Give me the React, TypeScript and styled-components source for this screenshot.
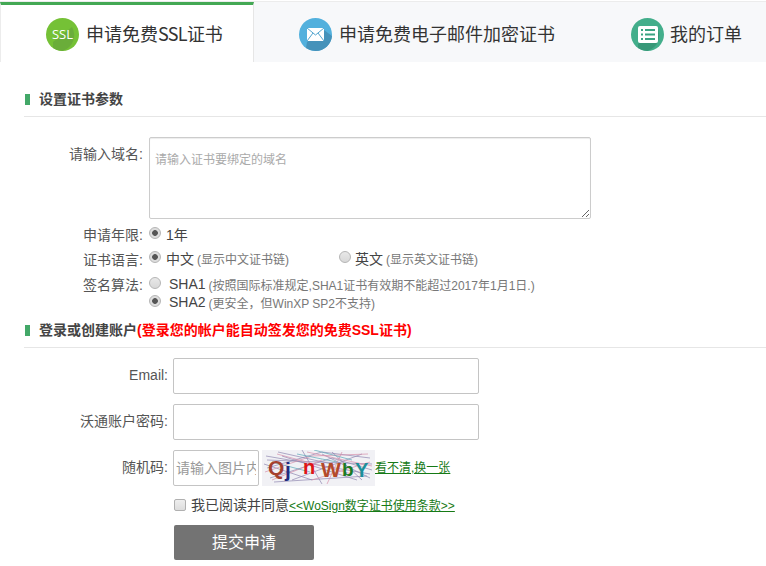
import React from "react";
import styled, { createGlobalStyle } from "styled-components";

const Global = createGlobalStyle`
  html, body { margin: 0; padding: 0; background: #fff; }
  body { font-family: "Liberation Sans", "Noto Sans CJK SC", sans-serif; font-size: 14px; color: #555; overflow: hidden; }
  * { box-sizing: border-box; }
`;

const Page = styled.div`width: 766px; height: 566px; overflow: hidden;`;

const Tabs = styled.div`
  display: flex; height: 61px; margin-top: 1px; border-top: 1px solid #ececec; background: #f7f8fa;
`;
const Tab = styled.div<{ $active?: boolean; $w: number; $pad: number }>`
  width: ${p => p.$w}px; padding-left: ${p => p.$pad}px; display: flex; align-items: center; gap: 7px;
  font-size: 18px; color: #333; font-family: "Noto Sans CJK SC", sans-serif;
  background: ${p => (p.$active ? "#fff" : "transparent")};
  border-top: 3px solid ${p => (p.$active ? "#43a854" : "transparent")};
  border-left: ${p => (p.$active ? "1px solid #ececec" : "0")};
  border-right: ${p => (p.$active ? "1px solid #e6e6e6" : "0")};
`;
const TabIcon = styled.svg`width: 33px; height: 33px; flex: none; margin-top: 2px;`;
const TabLabel = styled.span<{ $tight?: boolean }>`
  margin-top: -1px; white-space: nowrap; margin-left: ${p => (p.$tight ? "-1px" : "0")};
`;
const TabLatin = styled.span`letter-spacing: -0.7px;`;

const Section = styled.div<{ $top: number }>`
  margin: ${p => p.$top}px 0 0 24px; height: 27px; border-bottom: 1px solid #e6e6e6;
  display: flex; align-items: flex-start; gap: 9px;
  font-size: 14px; font-weight: 700; color: #444; line-height: 18px;
  font-family: "Liberation Sans", "Noto Sans CJK SC", sans-serif;
`;
const Mark = styled.i`width: 5px; height: 11px; background: #43a868; margin: 4px 0 0 1px; flex: none;`;
const Warn = styled.span`color: #f00;`;

const Row = styled.div<{ $top: number; $label: number; $gap?: number }>`
  display: grid; grid-template-columns: ${p => p.$label}px 1fr; column-gap: ${p => p.$gap ?? 6}px;
  margin-top: ${p => p.$top}px;
`;
const Label = styled.label<{ $pt?: number }>`
  text-align: right; font-size: 14px; color: #555; line-height: 18px; padding-top: ${p => p.$pt ?? 0}px; white-space: nowrap;
`;
const Area = styled.textarea`
  width: 442px; height: 82px; display: block; resize: both; border: 1px solid #ccc; border-radius: 2px;
  box-shadow: inset 0 1px 1px rgba(0,0,0,.075); padding: 14px 5px; margin: 0; outline: 0;
  font: 12px/16px "Liberation Sans", "Noto Sans CJK SC", sans-serif;
  &::placeholder { color: #aaa; opacity: 1; }
`;
const Options = styled.div`display: flex; align-items: center; height: 18px; font-size: 14px; color: #444; white-space: nowrap;`;
const Stack = styled.div`display: flex; flex-direction: column;`;
const Radio = styled.input.attrs({ type: "radio" })<{ $gap?: number }>`
  appearance: none; width: 12px; height: 12px; margin: -3px ${p => p.$gap ?? 5}px 0 0; border-radius: 50%; flex: none;
  border: 1px solid #b5b5b5; background: linear-gradient(#e8e8e8, #d8d8d8);
  &:checked { background: radial-gradient(circle, #555 0 2.5px, #ddd 3.2px); }
`;
const Hint = styled.span`font-size: 12px; color: #777; margin-left: 3px;`;
const Spacer = styled.span`width: 50px; flex: none;`;

const Field = styled.input<{ $w: number }>`
  display: block; width: ${p => p.$w}px; height: 36px; border: 1px solid #c4c4c4; border-radius: 2px; padding: 0 2px; margin: 0; outline: 0;
  font: 14px "Liberation Sans", "Noto Sans CJK SC", sans-serif; background: #fff;
  &::placeholder { color: #999; opacity: 1; }
`;
const CaptchaRow = styled.div`display: flex; align-items: center;`;
const Captcha = styled.svg`width: 113px; height: 36px; margin-left: 3px; flex: none; display: block;`;
const GreenLink = styled.a`color: #167a16; text-decoration: underline; font-size: 12px; white-space: nowrap;`;
const CaptchaLink = styled(GreenLink)`margin-bottom: 4px;`;
const Agree = styled.div`
  display: flex; align-items: center; margin: 9px 0 0 174px; height: 18px; font-size: 14px; color: #444; white-space: nowrap;
`;
const Check = styled.input.attrs({ type: "checkbox" })`
  appearance: none; width: 12px; height: 12px; margin: 1px 5px 0 0; border: 1px solid #b0b0b0; border-radius: 2px;
  background: linear-gradient(#eee, #ddd);
`;
const Submit = styled.button`
  display: block; width: 140px; height: 35px; margin: 12px 0 0 174px; padding: 0 0 3px; border: 0; border-radius: 2px;
  background: #737373; color: #fff; font: 16px "Noto Sans CJK SC", sans-serif;
`;

export default function App() {
  return (
    <Page>
      <Global />
      <Tabs>
        <Tab $active $w={254} $pad={45}>
          <TabIcon viewBox="0 0 33 33">
            <circle cx="16.5" cy="16.5" r="16.5" fill="#75c136" />
            <path d="M7 24 L26 9 A16.5 16.5 0 0 1 16.5 33 A16.5 16.5 0 0 1 7 30Z" fill="#6aad3a" />
            <text x="16.5" y="21" textAnchor="middle" fontSize="13" fill="#fff" fontFamily="Open Sans, sans-serif">SSL</text>
          </TabIcon>
          <TabLabel>申请免费<TabLatin>SSL</TabLatin>证书</TabLabel>
        </Tab>
        <Tab $w={377} $pad={45}>
          <TabIcon viewBox="0 0 33 33">
            <circle cx="16.5" cy="16.5" r="16.5" fill="#52b0dd" />
            <path d="M8 24 L25 12 L33 18 A16.5 16.5 0 0 1 16.5 33 A16.5 16.5 0 0 1 7 30Z" fill="#4592ba" />
            <rect x="8" y="10" width="17" height="13" fill="#fff" />
            <path d="M8 10 L16.5 17 L25 10 M8 23 L14 15 M25 23 L19 15" fill="none" stroke="#52a5cf" strokeWidth="1" />
          </TabIcon>
          <TabLabel>申请免费电子邮件加密证书</TabLabel>
        </Tab>
        <Tab $w={135} $pad={0}>
          <TabIcon viewBox="0 0 33 33">
            <circle cx="16.5" cy="16.5" r="16.5" fill="#43ae8b" />
            <path d="M7 26 L26 9 A16.5 16.5 0 0 1 16.5 33 A16.5 16.5 0 0 1 7 30Z" fill="#389878" />
            <rect x="7" y="8" width="20" height="17" rx="2" fill="#fff" />
            <path d="M10 12h2M14 12h10M10 16.500h2M14 16.500h10M10 21h2M14 21h10" stroke="#3aa382" strokeWidth="2" />
          </TabIcon>
          <TabLabel $tight>我的订单</TabLabel>
        </Tab>
      </Tabs>

      <Section $top={28}><Mark /><span>设置证书参数</span></Section>

      <Row $top={20} $label={143}>
        <Label $pt={8}>请输入域名:</Label>
        <Area placeholder="请输入证书要绑定的域名" />
      </Row>
      <Row $top={6} $label={143}>
        <Label $pt={1}>申请年限:</Label>
        <Options><Radio defaultChecked name="y" />1年</Options>
      </Row>
      <Row $top={5} $label={143}>
        <Label $pt={2}>证书语言:</Label>
        <Options>
          <Radio defaultChecked name="l" />中文<Hint>(显示中文证书链)</Hint><Spacer />
          <Radio $gap={4} name="l" />英文<Hint>(显示英文证书链)</Hint>
        </Options>
      </Row>
      <Row $top={6} $label={143}>
        <Label $pt={1}>签名算法:</Label>
        <Stack>
          <Options><Radio $gap={8} name="s" />SHA1<Hint>(按照国际标准规定,SHA1证书有效期不能超过2017年1月1日.)</Hint></Options>
          <Options><Radio $gap={8} defaultChecked name="s" />SHA2<Hint>(更安全，但WinXP SP2不支持)</Hint></Options>
        </Stack>
      </Row>

      <Section $top={10}><Mark /><span>登录或创建账户<Warn>(登录您的帐户能自动签发您的免费SSL证书)</Warn></span></Section>

      <Row $top={10} $label={168} $gap={5}>
        <Label $pt={8}>Email:</Label>
        <Field $w={306} />
      </Row>
      <Row $top={10} $label={168} $gap={5}>
        <Label $pt={8}>沃通账户密码:</Label>
        <Field $w={306} type="password" />
      </Row>
      <Row $top={10} $label={168} $gap={5}>
        <Label $pt={8}>随机码:</Label>
        <CaptchaRow>
          <Field $w={86} placeholder="请输入图片内容" />
          <Captcha viewBox="0 0 113 36">
            <rect width="113" height="36" fill="#f1f1f5" />
            <path d="M5 18 L60 2 L108 8 M8 28 L70 8 L110 20 M20 6 L95 30 M40 0 L60 34 M70 2 L100 30 M5 10 L110 14 M12 32 L105 26 M30 30 L100 4 M2 14 L50 30 M60 4 L108 28 M4 6 L108 24 M16 2 L70 14" stroke="#8f86b0" strokeWidth="0.7" fill="none" />
            <path d="M3 22 L50 6 L106 4 M15 4 L90 24 M50 30 L108 12 M10 30 L60 10 M45 2 L110 16 M80 2 L65 34" stroke="#d78fab" strokeWidth="0.7" fill="none" />
            <path d="M35 4 L75 12 M52 0 L90 10 M10 12 L48 22" stroke="#5aa7b8" strokeWidth="0.7" fill="none" />
            <g fontFamily="Liberation Sans, sans-serif" fontWeight="700" fontSize="21">
              <text x="6" y="25" fill="#a5402e">Q</text>
              <text x="23" y="27" fill="#222a80">j</text>
              <text x="41" y="24" fontSize="20" fill="#e01515">n</text>
              <text x="59" y="27" fill="#b44a2a">W</text>
              <text x="80" y="26" fontSize="19" fill="#1a7a24">b</text>
              <text x="93" y="27" fontSize="20" fill="#1c8f9a">Y</text>
            </g>
          </Captcha>
          <CaptchaLink>看不清,换一张</CaptchaLink>
        </CaptchaRow>
      </Row>
      <Agree><Check />我已阅读并同意<GreenLink>&lt;&lt;WoSign数字证书使用条款&gt;&gt;</GreenLink></Agree>
      <Submit>提交申请</Submit>
    </Page>
  );
}
